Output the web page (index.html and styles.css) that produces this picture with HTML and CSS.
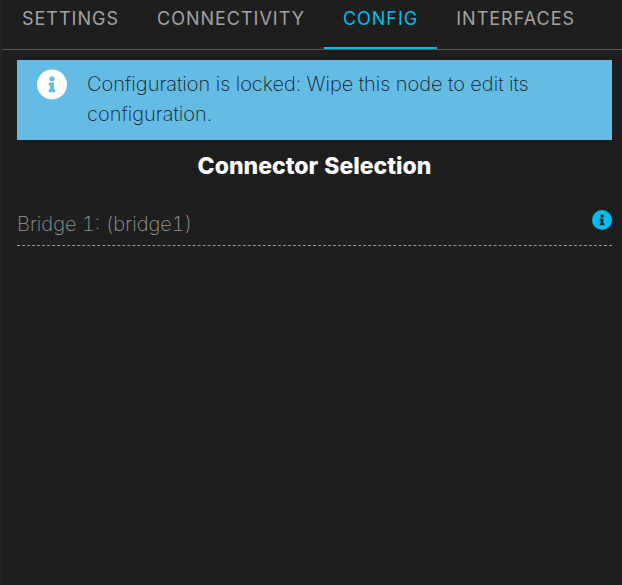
FILE: index.html
```html
<!DOCTYPE html>
<html lang="en">
<head>
    <meta charset="UTF-8">
    <meta name="viewport" content="width=device-width, initial-scale=1.0">
    <title>Node Config</title>
    <link rel="stylesheet" href="styles.css">
</head>
<body>

    <div class="panel">
        <nav class="tabs">
            <button class="tab">SETTINGS</button>
            <button class="tab">CONNECTIVITY</button>
            <button class="tab active">CONFIG</button>
            <button class="tab">INTERFACES</button>
        </nav>

        <main class="content">
            <div class="alert">
                <svg class="alert-icon" viewBox="8 8 496 496" aria-hidden="true">
                    <path d="M256 8a248 248 0 1 0 0 496a248 248 0 1 0 0-496zm0 110a42 42 0 1 1 0 84a42 42 0 1 1 0-84zm56 254c0 7-5 12-12 12h-88c-7 0-12-5-12-12v-24c0-7 5-12 12-12h12v-64h-12c-7 0-12-5-12-12v-24c0-7 5-12 12-12h64c7 0 12 5 12 12v100h12c7 0 12 5 12 12v24z"/>
                </svg>
                <p>Configuration is locked: Wipe this node to edit its configuration.</p>
            </div>

            <h2>Connector Selection</h2>

            <div class="connector">
                <span>Bridge 1: (bridge1)</span>
                <button class="info-btn" aria-label="Bridge info">
                    <svg viewBox="8 8 496 496" aria-hidden="true">
                        <path d="M256 8a248 248 0 1 0 0 496a248 248 0 1 0 0-496zm0 110a42 42 0 1 1 0 84a42 42 0 1 1 0-84zm56 254c0 7-5 12-12 12h-88c-7 0-12-5-12-12v-24c0-7 5-12 12-12h12v-64h-12c-7 0-12-5-12-12v-24c0-7 5-12 12-12h64c7 0 12 5 12 12v100h12c7 0 12 5 12 12v24z"/>
                    </svg>
                </button>
            </div>
        </main>
    </div>

</body>
</html>
```
FILE: styles.css
```css
* {
    box-sizing: border-box;
}
body {
    margin: 0;
    font-family: Inter, "Liberation Sans", sans-serif;
    font-size: 20px;
    font-weight: 200;
    font-variant-numeric: tabular-nums;
    line-height: 30px;
    background-color: #1e1e1e;
}
.panel {
    min-height: 100vh;
    border-left: 2px solid #20262a;
}
.tabs {
    display: flex;
    height: 50px;
    padding-left: 1px;
    border-bottom: 1px solid #5a5a5a;
}
.tab {
    padding: 0 19px 11px;
    border: none;
    border-bottom: 2px solid transparent;
    background: none;
    color: #a3a3a3;
    font-family: inherit;
    font-size: 18px;
    font-weight: 400;
    letter-spacing: 1px;
    cursor: pointer;
}
.tab.active {
    color: #00bceb;
    border-bottom-color: #00bceb;
}
.content {
    padding: 10px 10px 10px 15px;
}
.alert {
    display: flex;
    align-items: flex-start;
    gap: 20px;
    padding: 9px 20px 11px;
    background-color: #64bbe3;
    color: #10181c;
}
.alert-icon {
    flex: none;
    width: 30px;
    height: 31px;
    fill: #fff;
}
.alert p {
    margin: 0;
}
h2 {
    margin: 11px 0 10px;
    font-size: 23px;
    font-weight: 800;
    text-align: center;
    color: #fff;
}
.connector {
    display: flex;
    justify-content: space-between;
    align-items: flex-start;
    margin-top: 28px;
    padding-bottom: 6px;
    border-bottom: 1px dashed #999;
    color: #969696;
}
.info-btn {
    display: flex;
    padding: 1px 0 0;
    border: none;
    background: none;
    cursor: pointer;
}
.info-btn svg {
    width: 20px;
    height: 20px;
    fill: #00bceb;
}
```
